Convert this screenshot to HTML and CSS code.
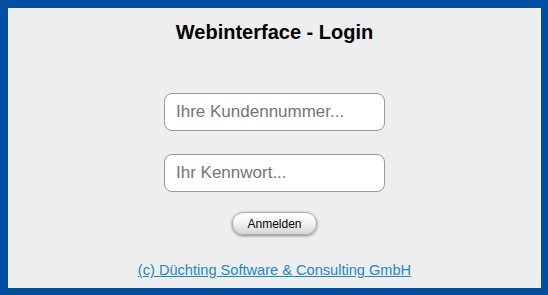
FILE: index.html
```html
<!DOCTYPE html>
<html lang="de">
<head>
<meta charset="utf-8">
<title>Webinterface - Login</title>
<link rel="stylesheet" href="styles.css">
</head>
<body>
<div class="frame">
  <h1 class="title">Webinterface - Login</h1>
  <form class="login">
    <input class="field" type="text" placeholder="Ihre Kundennummer...">
    <input class="field" type="password" placeholder="Ihr Kennwort...">
    <button class="btn" type="button">Anmelden</button>
  </form>
  <a class="footer" href="#">(c) Düchting Software &amp; Consulting GmbH</a>
</div>
</body>
</html>
```
FILE: styles.css
```css
html, body {
  margin: 0;
  padding: 0;
}
body {
  background: #004fa3;
  width: 548px;
  height: 295px;
  padding: 8px 7px 7px 8px;
  box-sizing: border-box;
  font-family: "Liberation Sans", Arial, sans-serif;
}
.frame {
  background: #eeeeee;
  height: 280px;
  display: flex;
  flex-direction: column;
  align-items: center;
}
.title {
  margin: 13px 0 0;
  font-size: 20px;
  line-height: 23px;
  font-weight: bold;
  color: #000;
}
.login {
  display: flex;
  flex-direction: column;
  align-items: center;
  margin-top: 49px;
}
.field {
  width: 221px;
  height: 38px;
  box-sizing: border-box;
  border: 1px solid #999;
  border-radius: 8px;
  background: #fff;
  padding: 0 11px;
  font-family: "Liberation Sans", Arial, sans-serif;
  font-size: 17px;
  color: #333;
  margin-bottom: 23px;
  outline: none;
}
.field::placeholder {
  color: #757575;
}
.field + .field {
  margin-bottom: 20px;
}
.btn {
  width: 85px;
  height: 23px;
  border: 1px solid #aaa;
  border-radius: 11px;
  background: linear-gradient(#ffffff 0%, #f4f4f4 45%, #d6d6d6 100%);
  box-shadow: 0 1px 3px rgba(0,0,0,0.45);
  font-family: "Liberation Sans", Arial, sans-serif;
  font-size: 12px;
  color: #000;
  padding: 0;
}
.footer {
  margin-top: 27px;
  font-size: 14.6px;
  line-height: 17px;
  color: #1a8ac6;
  text-decoration: underline;
}
```
